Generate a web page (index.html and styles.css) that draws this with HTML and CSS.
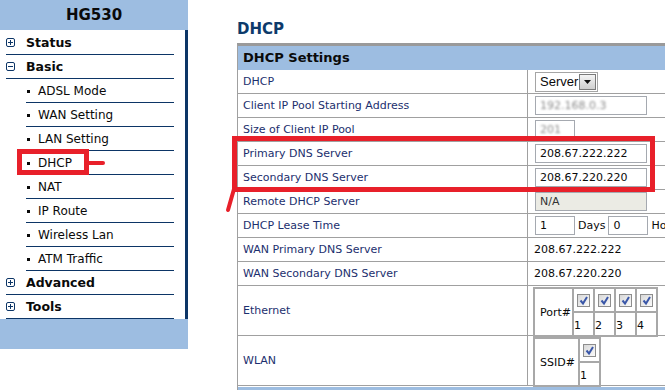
FILE: index.html
```html
<!DOCTYPE html>
<html lang="en">

<head>
    <meta charset="UTF-8">
    <title>HG530 - DHCP</title>
    <link rel="stylesheet" href="styles.css">
</head>

<body>
    <div class="sidebar">
        <div class="brand">HG530</div>
        <ul class="menu">
            <li class="group"><svg class="toggle" viewBox="0 0 9 9"><rect x="0.5" y="0.5" width="8" height="8" rx="1.5"/><path d="M2 4.5h5M4.5 2v5"/></svg>Status</li>
            <li class="group"><svg class="toggle" viewBox="0 0 9 9"><rect x="0.5" y="0.5" width="8" height="8" rx="1.5"/><path d="M2 4.5h5"/></svg>Basic</li>
            <li class="sub">ADSL Mode</li>
            <li class="sub">WAN Setting</li>
            <li class="sub">LAN Setting</li>
            <li class="sub">DHCP</li>
            <li class="sub">NAT</li>
            <li class="sub">IP Route</li>
            <li class="sub">Wireless Lan</li>
            <li class="sub">ATM Traffic</li>
            <li class="group"><svg class="toggle" viewBox="0 0 9 9"><rect x="0.5" y="0.5" width="8" height="8" rx="1.5"/><path d="M2 4.5h5M4.5 2v5"/></svg>Advanced</li>
            <li class="group"><svg class="toggle" viewBox="0 0 9 9"><rect x="0.5" y="0.5" width="8" height="8" rx="1.5"/><path d="M2 4.5h5M4.5 2v5"/></svg>Tools</li>
        </ul>
        <div class="sidebar-foot"></div>
    </div>

    <div class="content">
        <h1 class="page-title">DHCP</h1>
        <div class="panel">
            <div class="panel-head">DHCP Settings</div>
            <div class="row">
                <div class="label">DHCP</div>
                <div class="value">
                    <div class="select"><span class="select-text">Server</span><span class="select-btn"><svg viewBox="0 0 7 4"><path d="M0 0h7L3.5 4z"/></svg></span></div>
                </div>
            </div>
            <div class="row">
                <div class="label">Client IP Pool Starting Address</div>
                <div class="value"><div class="field"><span class="blur">192.168.0.3</span></div></div>
            </div>
            <div class="row">
                <div class="label">Size of Client IP Pool</div>
                <div class="value"><div class="field small"><span class="blur">201</span></div></div>
            </div>
            <div class="row">
                <div class="label">Primary DNS Server</div>
                <div class="value"><div class="field">208.67.222.222</div></div>
            </div>
            <div class="row">
                <div class="label">Secondary DNS Server</div>
                <div class="value"><div class="field">208.67.220.220</div></div>
            </div>
            <div class="row">
                <div class="label">Remote DHCP Server</div>
                <div class="value"><div class="field disabled">N/A</div></div>
            </div>
            <div class="row">
                <div class="label">DHCP Lease Time</div>
                <div class="value">
                    <div class="field small">1</div><span class="unit">Days</span><div class="field small">0</div><span class="unit">Ho</span>
                </div>
            </div>
            <div class="row">
                <div class="label">WAN Primary DNS Server</div>
                <div class="value">208.67.222.222</div>
            </div>
            <div class="row">
                <div class="label">WAN Secondary DNS Server</div>
                <div class="value">208.67.220.220</div>
            </div>
            <div class="row tall">
                <div class="label">Ethernet</div>
                <div class="value top">
                    <table class="ports">
                        <tr>
                            <td rowspan="2" class="port-name">Port#</td>
                            <td class="cb-cell"><span class="cb"><svg viewBox="0 0 11 11"><path d="M2.5 5.5l2.5 3 4-6.5"/></svg></span></td>
                            <td class="cb-cell"><span class="cb"><svg viewBox="0 0 11 11"><path d="M2.5 5.5l2.5 3 4-6.5"/></svg></span></td>
                            <td class="cb-cell"><span class="cb"><svg viewBox="0 0 11 11"><path d="M2.5 5.5l2.5 3 4-6.5"/></svg></span></td>
                            <td class="cb-cell"><span class="cb"><svg viewBox="0 0 11 11"><path d="M2.5 5.5l2.5 3 4-6.5"/></svg></span></td>
                        </tr>
                        <tr>
                            <td class="num">1</td>
                            <td class="num">2</td>
                            <td class="num">3</td>
                            <td class="num">4</td>
                        </tr>
                    </table>
                </div>
            </div>
            <div class="row tall">
                <div class="label">WLAN</div>
                <div class="value top">
                    <table class="ports">
                        <tr>
                            <td rowspan="2" class="port-name ssid">SSID#</td>
                            <td class="cb-cell"><span class="cb"><svg viewBox="0 0 11 11"><path d="M2.5 5.5l2.5 3 4-6.5"/></svg></span></td>
                        </tr>
                        <tr>
                            <td class="num">1</td>
                        </tr>
                    </table>
                </div>
            </div>
            <div class="panel-foot"></div>
        </div>
    </div>

    <!-- red annotations drawn over the screenshot -->
    <div class="mark mark-menu"></div>
    <div class="mark mark-dns"></div>
    <svg class="mark-tails" width="665" height="390" viewBox="0 0 665 390">
        <path d="M89 163H103"/>
        <path d="M234 189L228 210"/>
    </svg>
</body>

</html>
```

FILE: styles.css
```css
* {
    margin: 0;
    padding: 0;
    box-sizing: border-box;
}

html,
body {
    overflow: hidden;
    height: 100%;
}

body {
    display: flex;
    align-items: flex-start;
    font-family: "DejaVu Sans", Verdana, sans-serif;
    background-color: white;
    position: relative;
}

/* left menu */

.sidebar {
    width: 188px;
    flex: none;
}

.brand {
    height: 30px;
    background-color: #9dbde1;
    color: #0a0a0a;
    font-size: 15px;
    font-weight: bold;
    text-align: center;
    line-height: 31px;
}

.menu {
    list-style: none;
    border-right: 3px solid #0c3566;
    padding-top: 1px;
}

.menu li {
    height: 24px;
    border-bottom: 1px solid #0c3566;
    margin-right: 11px;
    display: flex;
    align-items: center;
    font-size: 12px;
    color: #0a0a0a;
}

.menu .group {
    margin-left: 6px;
    font-weight: bold;
    font-size: 12.5px;
}

.toggle {
    width: 9px;
    height: 9px;
    margin-right: 11px;
    fill: none;
    stroke: #0c3566;
    stroke-width: 1;
}

.menu .sub {
    margin-left: 26px;
    padding-left: 12px;
    position: relative;
}

.menu .sub::before {
    content: "";
    position: absolute;
    left: 1px;
    top: 11px;
    width: 3px;
    height: 3px;
    background-color: #0a0a0a;
}

.sidebar-foot {
    height: 30px;
    background-color: #9dbde1;
}

/* main form */

.content {
    flex: none;
    width: 470px;
    margin-left: 49px;
}

.page-title {
    font-size: 15px;
    color: #0d3a6b;
    padding-top: 21px;
    line-height: 17px;
    margin-bottom: 5px;
}

.panel {
    border-top: 3px solid #9a9a9a;
    border-left: 1px solid #a0a0a0;
}

.panel-head {
    height: 24px;
    background-color: #9dbde1;
    font-size: 13px;
    font-weight: bold;
    color: #0a0a0a;
    padding-left: 5px;
    line-height: 24px;
}

.row {
    display: flex;
    height: 24px;
    border-bottom: 1px solid #a0a0a0;
}

.row.tall {
    height: 50px;
}

.label {
    width: 290px;
    flex: none;
    border-right: 1px solid #a0a0a0;
    padding-left: 5px;
    display: flex;
    align-items: center;
    font-size: 11px;
    color: #1c2f6e;
}

.value {
    flex: 1;
    display: flex;
    align-items: center;
    padding-left: 6px;
    font-size: 11px;
    color: #0a0a0a;
    white-space: nowrap;
}

.value.top {
    align-items: flex-start;
    padding-left: 5px;
}

.field {
    width: 112px;
    height: 19px;
    margin-left: 1px;
    border: 1px solid #a5a9b0;
    padding-left: 4px;
    line-height: 17px;
    font-size: 11px;
    color: #0a0a0a;
}

.field.small {
    width: 40px;
}

.field.disabled {
    background-color: #ebebe4;
    color: #333;
}

.blur {
    color: #8c8c8c;
    filter: blur(1px);
}

.unit {
    margin: 0 2px 0 3px;
    color: #0a0a0a;
}

.select {
    display: flex;
    align-items: center;
    width: 63px;
    height: 20px;
    margin-left: 1px;
    border: 1px solid #a5a5a5;
    font-family: "Liberation Sans", Arial, sans-serif;
    font-size: 13px;
}

.select-text {
    flex: 1;
    padding-left: 4px;
}

.select-btn {
    width: 17px;
    height: 16px;
    margin-right: 1px;
    border: 1px solid #7a7a7a;
    background: linear-gradient(#f4f4f4, #cfcfcf);
    display: flex;
    align-items: center;
    justify-content: center;
}

.select-btn svg {
    width: 7px;
    height: 4px;
    fill: #111;
}

/* port tables */

.ports {
    border-collapse: collapse;
    margin-top: 1px;
    font-size: 11px;
    color: #0a0a0a;
}

.ports td {
    border: 2px solid #a8a8a8;
    padding: 0;
}

.port-name {
    width: 39px;
    padding-left: 5px !important;
    height: 48px;
}

.port-name.ssid {
    width: 45px;
}

.cb-cell {
    width: 21px;
    height: 24px;
    text-align: center;
    vertical-align: middle;
}

.num {
    height: 24px;
    vertical-align: middle;
    padding-top: 3px !important;
}

.cb {
    display: inline-flex;
    width: 13px;
    height: 13px;
    border: 1px solid #8d8d8d;
    background: linear-gradient(135deg, #d8d8d8, #fafafa);
    vertical-align: middle;
}

.cb svg {
    width: 11px;
    height: 11px;
    fill: none;
    stroke: #3a57a8;
    stroke-width: 2;
}

.panel-foot {
    height: 10px;
    margin-top: 1px;
    background-color: #9dbde1;
}

/* red annotation marks */

.mark {
    position: absolute;
    border: 5px solid #e8202a;
}

.mark-menu {
    left: 17px;
    top: 149px;
    width: 72px;
    height: 26px;
}

.mark-dns {
    left: 232px;
    top: 136px;
    width: 423px;
    height: 56px;
}

.mark-tails {
    position: absolute;
    left: 0;
    top: 0;
    fill: none;
    stroke: #e8202a;
    stroke-width: 4;
    stroke-linecap: round;
}
```
